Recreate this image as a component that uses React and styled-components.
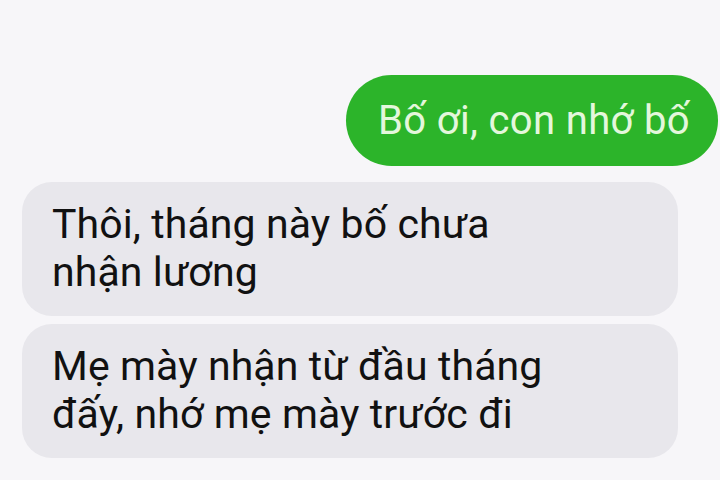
import React from "react";
import styled, {createGlobalStyle} from "styled-components";

const GlobalStyle = createGlobalStyle`
  body {
    margin: 0;
    background: #f7f6f9;
    font-family: Roboto, "Noto Sans", sans-serif;
  }
`;

const Thread = styled.div`
  width: 720px;
  height: 480px;
  box-sizing: border-box;
  padding: 75px 2px 0 22px;
  display: flex;
  flex-direction: column;
  overflow: hidden;
`;

const SentRow = styled.div`
  display: flex;
  justify-content: flex-end;
  margin-bottom: 16px;
`;

const SentBubble = styled.div`
  height: 91px;
  line-height: 91px;
  padding: 0 28px 0 32px;
  border-radius: 46px;
  background: #2cb42a;
  color: #e4f7dc;
  font-size: 40px;
  letter-spacing: 0.35px;
  white-space: nowrap;
`;

const ReceivedBubble = styled.div`
  width: 656px;
  box-sizing: border-box;
  padding: 18px 30px 20px;
  margin-bottom: ${(props) => (props.$last ? 0 : 8)}px;
  border-radius: 30px;
  background: #e8e7ec;
  color: #111;
  font-size: 41px;
  line-height: 48px;
  letter-spacing: 0.1px;
  white-space: nowrap;
`;

const App = () => {
  return (
    <>
      <GlobalStyle />
      <Thread>
        <SentRow>
          <SentBubble>Bố ơi, con nhớ bố</SentBubble>
        </SentRow>
        <ReceivedBubble>
          Thôi, tháng này bố chưa
          <br />
          nhận lương
        </ReceivedBubble>
        <ReceivedBubble $last>
          Mẹ mày nhận từ đầu tháng
          <br />
          đấy, nhớ mẹ mày trước đi
        </ReceivedBubble>
      </Thread>
    </>
  );
};

export default App;
